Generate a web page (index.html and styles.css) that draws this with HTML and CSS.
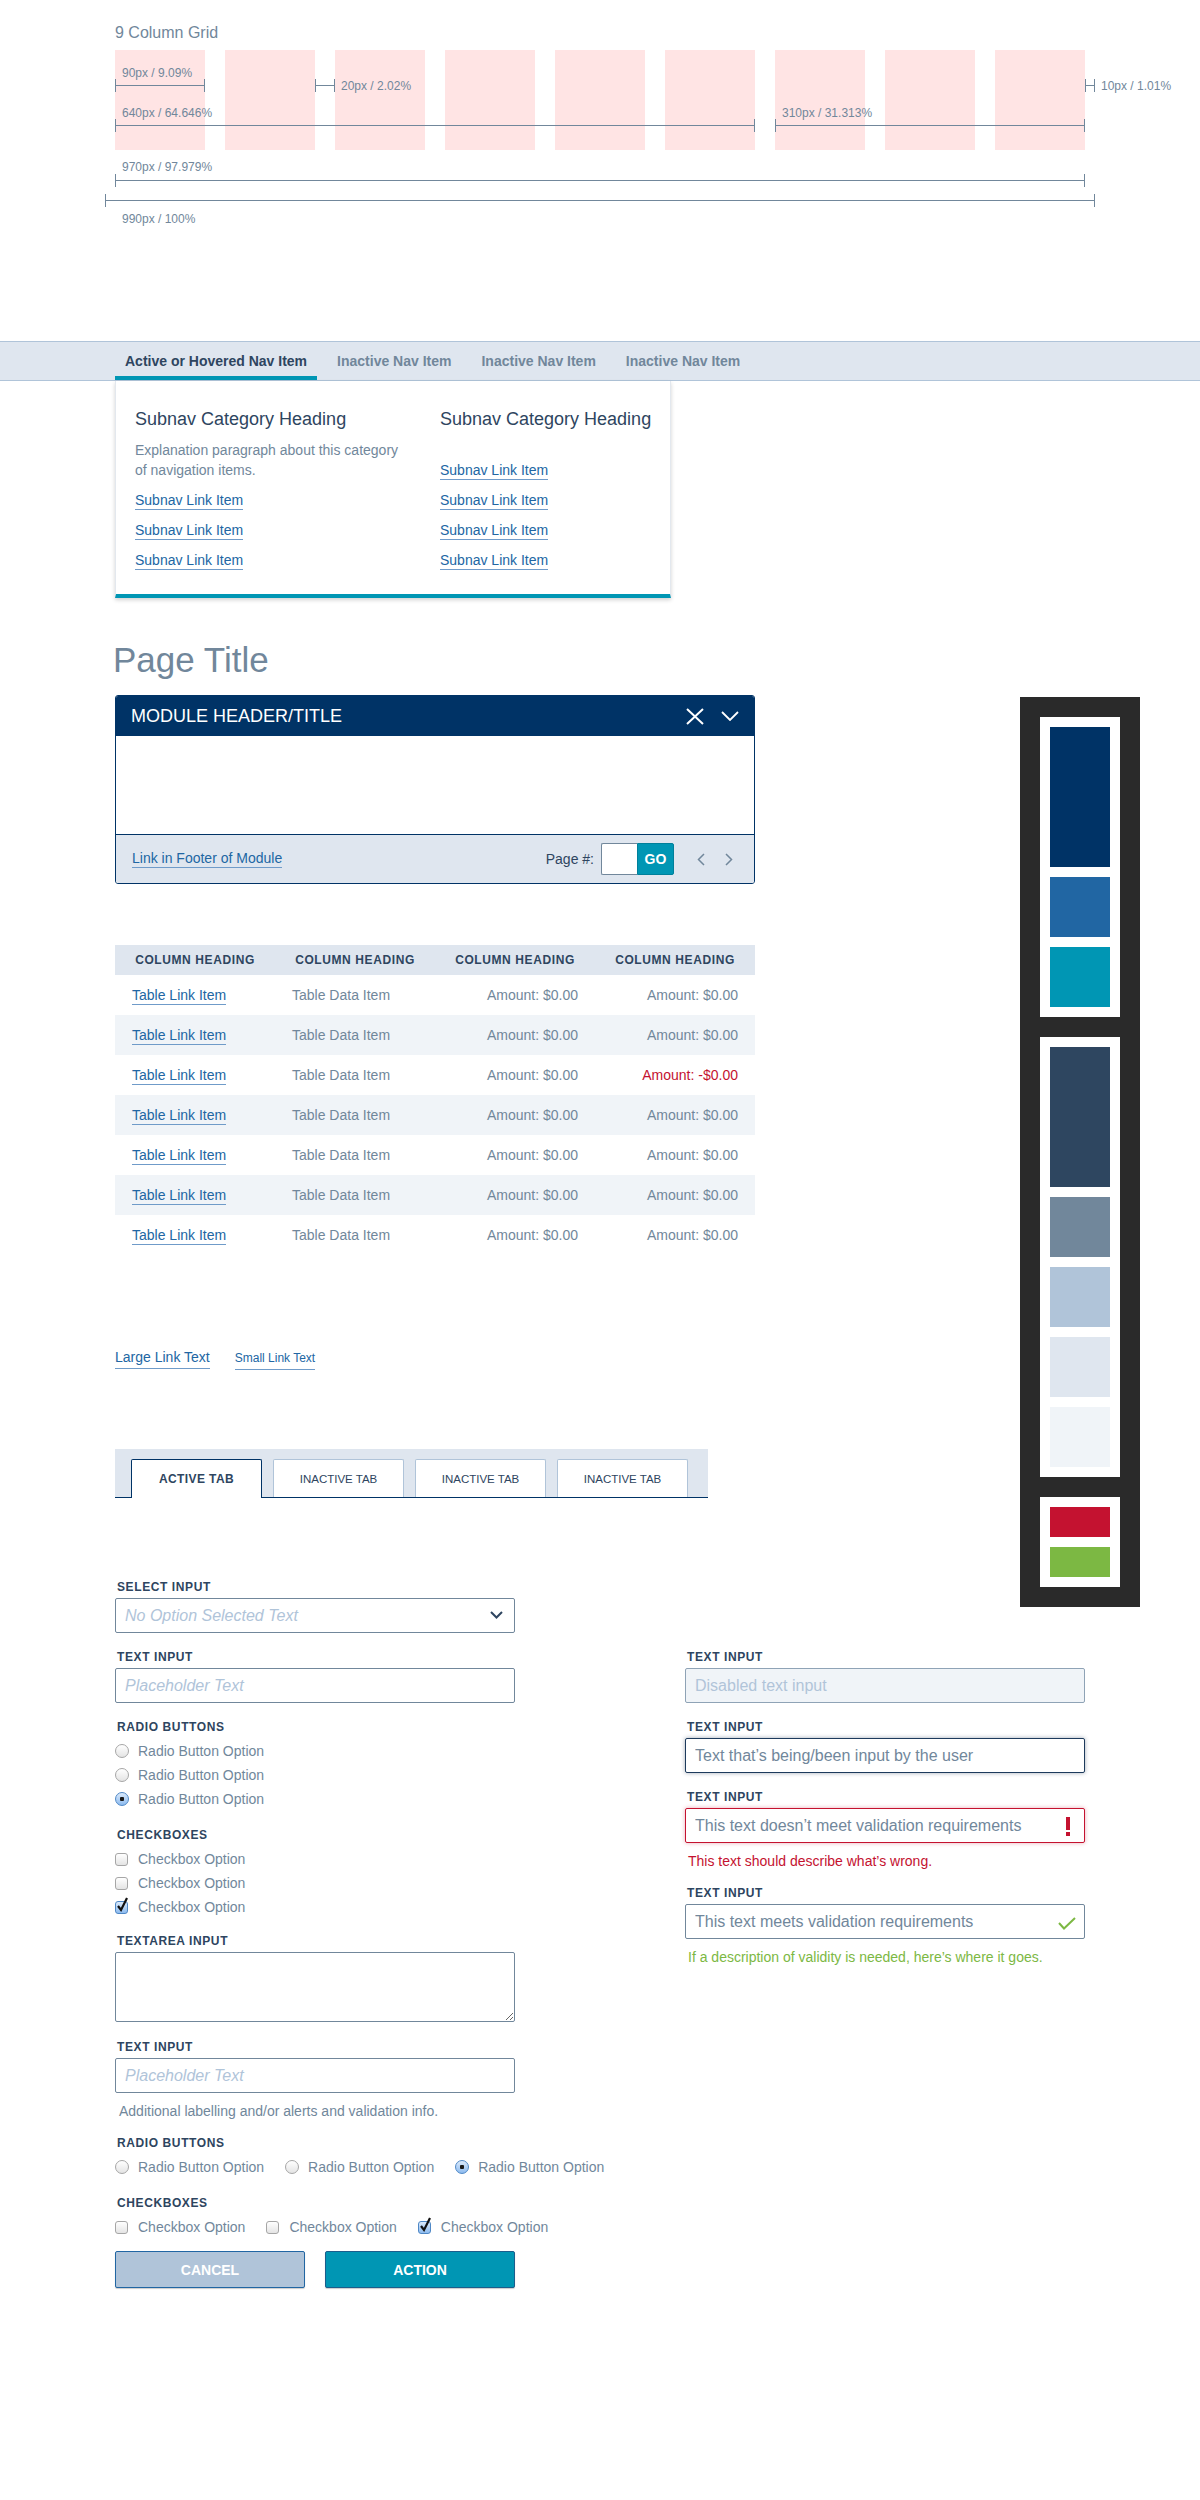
FILE: index.html
```html
<!DOCTYPE html>
<html lang="en">
<head>
    <meta charset="UTF-8" />
    <title>UI Style Guide</title>
    <link rel="stylesheet" href="styles.css">
</head>
<body>
    <!-- Grid -->
    <section class="grid-demo">
        <h2 class="grid-title">9 Column Grid</h2>
        <div class="grid-frame">
            <div class="grid-cols">
                <div class="col"></div>
                <div class="col"></div>
                <div class="col"></div>
                <div class="col"></div>
                <div class="col"></div>
                <div class="col"></div>
                <div class="col"></div>
                <div class="col"></div>
                <div class="col"></div>
                <div class="ruler on-grid m-90"><span class="ruler-label">90px / 9.09%</span></div>
                <div class="ruler on-grid m-20"><span class="ruler-label side">20px / 2.02%</span></div>
                <div class="ruler on-grid m-10"><span class="ruler-label side">10px / 1.01%</span></div>
                <div class="ruler on-grid m-640"><span class="ruler-label">640px / 64.646%</span></div>
                <div class="ruler on-grid m-310"><span class="ruler-label">310px / 31.313%</span></div>
            </div>
            <p class="ruler-caption first">970px / 97.979%</p>
            <div class="ruler inner"></div>
            <div class="ruler outer"></div>
            <p class="ruler-caption last">990px / 100%</p>
        </div>
    </section>

    <!-- Navigation -->
    <nav class="main-nav">
        <ul class="nav-list">
            <li><a class="nav-item active" href="#">Active or Hovered Nav Item</a></li>
            <li><a class="nav-item" href="#">Inactive Nav Item</a></li>
            <li><a class="nav-item" href="#">Inactive Nav Item</a></li>
            <li><a class="nav-item" href="#">Inactive Nav Item</a></li>
        </ul>
    </nav>

    <!-- Subnav dropdown -->
    <div class="subnav">
        <div class="subnav-col">
            <h3 class="subnav-heading">Subnav Category Heading</h3>
            <p class="subnav-text">Explanation paragraph about this category<br>of navigation items.</p>
            <ul class="subnav-links">
                <li><a class="link" href="#">Subnav Link Item</a></li>
                <li><a class="link" href="#">Subnav Link Item</a></li>
                <li><a class="link" href="#">Subnav Link Item</a></li>
            </ul>
        </div>
        <div class="subnav-col">
            <h3 class="subnav-heading">Subnav Category Heading</h3>
            <ul class="subnav-links no-text">
                <li><a class="link" href="#">Subnav Link Item</a></li>
                <li><a class="link" href="#">Subnav Link Item</a></li>
                <li><a class="link" href="#">Subnav Link Item</a></li>
                <li><a class="link" href="#">Subnav Link Item</a></li>
            </ul>
        </div>
    </div>

    <h1 class="page-title">Page Title</h1>

    <div class="layout">
        <div class="main-top">
            <!-- Module -->
            <div class="module">
                <div class="module-header">
                    <h2 class="module-title">MODULE HEADER/TITLE</h2>
                    <div class="module-icons">
                        <svg width="18" height="17" viewBox="0 0 18 17"><path d="M1 1 L17 16 M17 1 L1 16" stroke="#fff" stroke-width="2" fill="none"/></svg>
                        <svg width="18" height="10" viewBox="0 0 18 10"><polyline points="1,1 9,9 17,1" stroke="#fff" stroke-width="1.8" fill="none"/></svg>
                    </div>
                </div>
                <div class="module-body"></div>
                <div class="module-footer">
                    <a class="link" href="#">Link in Footer of Module</a>
                    <div class="pager">
                        <span class="pager-label">Page #:</span>
                        <div class="pager-box">
                            <input class="pager-input" type="text">
                            <button class="pager-go">GO</button>
                        </div>
                        <div class="pager-arrows">
                            <svg width="8" height="13" viewBox="0 0 8 13"><polyline points="7,1 1.5,6.5 7,12" stroke="#71879b" stroke-width="1.5" fill="none"/></svg>
                            <svg width="8" height="13" viewBox="0 0 8 13"><polyline points="1,1 6.5,6.5 1,12" stroke="#71879b" stroke-width="1.5" fill="none"/></svg>
                        </div>
                    </div>
                </div>
            </div>

            <!-- Table -->
            <table class="data-table">
                <thead>
                    <tr>
                        <th>Column Heading</th>
                        <th>Column Heading</th>
                        <th>Column Heading</th>
                        <th>Column Heading</th>
                    </tr>
                </thead>
                <tbody>
                    <tr><td><a class="link" href="#">Table Link Item</a></td><td>Table Data Item</td><td class="num">Amount: $0.00</td><td class="num">Amount: $0.00</td></tr>
                    <tr><td><a class="link" href="#">Table Link Item</a></td><td>Table Data Item</td><td class="num">Amount: $0.00</td><td class="num">Amount: $0.00</td></tr>
                    <tr><td><a class="link" href="#">Table Link Item</a></td><td>Table Data Item</td><td class="num">Amount: $0.00</td><td class="num negative">Amount: -$0.00</td></tr>
                    <tr><td><a class="link" href="#">Table Link Item</a></td><td>Table Data Item</td><td class="num">Amount: $0.00</td><td class="num">Amount: $0.00</td></tr>
                    <tr><td><a class="link" href="#">Table Link Item</a></td><td>Table Data Item</td><td class="num">Amount: $0.00</td><td class="num">Amount: $0.00</td></tr>
                    <tr><td><a class="link" href="#">Table Link Item</a></td><td>Table Data Item</td><td class="num">Amount: $0.00</td><td class="num">Amount: $0.00</td></tr>
                    <tr><td><a class="link" href="#">Table Link Item</a></td><td>Table Data Item</td><td class="num">Amount: $0.00</td><td class="num">Amount: $0.00</td></tr>
                </tbody>
            </table>

            <!-- Links -->
            <div class="link-row">
                <a class="link large" href="#">Large Link Text</a>
                <a class="link small" href="#">Small Link Text</a>
            </div>

            <!-- Tabs -->
            <ul class="tabs">
                <li class="tab active">ACTIVE TAB</li>
                <li class="tab">INACTIVE TAB</li>
                <li class="tab">INACTIVE TAB</li>
                <li class="tab">INACTIVE TAB</li>
            </ul>
        </div>

        <!-- Colour palette -->
        <div class="palette">
            <div class="swatch-group">
                <div class="swatch tall navy"></div>
                <div class="swatch blue"></div>
                <div class="swatch teal"></div>
            </div>
            <div class="swatch-group">
                <div class="swatch tall dark"></div>
                <div class="swatch slate"></div>
                <div class="swatch light"></div>
                <div class="swatch lighter"></div>
                <div class="swatch lightest"></div>
            </div>
            <div class="swatch-group">
                <div class="swatch short red"></div>
                <div class="swatch short green"></div>
            </div>
        </div>

        <!-- Forms -->
        <div class="forms">
            <div class="form-col">
                <div class="field">
                    <label class="field-label">Select Input</label>
                    <div class="input-wrap">
                        <select class="input select">
                            <option>No Option Selected Text</option>
                        </select>
                        <svg class="select-arrow" width="13" height="8" viewBox="0 0 13 8"><polyline points="1,1 6.5,6.5 12,1" stroke="#2e4560" stroke-width="2" fill="none"/></svg>
                    </div>
                </div>
                <div class="field">
                    <label class="field-label">Text Input</label>
                    <input class="input" type="text" placeholder="Placeholder Text">
                </div>
                <div class="field">
                    <label class="field-label">Radio Buttons</label>
                    <div class="options">
                        <label class="option"><span class="radio"></span>Radio Button Option</label>
                        <label class="option"><span class="radio"></span>Radio Button Option</label>
                        <label class="option"><span class="radio checked"></span>Radio Button Option</label>
                    </div>
                </div>
                <div class="field tight">
                    <label class="field-label">Checkboxes</label>
                    <div class="options">
                        <label class="option"><span class="checkbox"></span>Checkbox Option</label>
                        <label class="option"><span class="checkbox"></span>Checkbox Option</label>
                        <label class="option"><span class="checkbox checked"><svg width="13" height="16" viewBox="0 0 13 16"><polyline points="2,9 5,13 11,1" stroke="#111" stroke-width="2.2" fill="none"/></svg></span>Checkbox Option</label>
                    </div>
                </div>
                <div class="field loose">
                    <label class="field-label">Textarea Input</label>
                    <textarea class="input textarea"></textarea>
                </div>
                <div class="field has-note">
                    <label class="field-label">Text Input</label>
                    <input class="input" type="text" placeholder="Placeholder Text">
                    <p class="field-note">Additional labelling and/or alerts and validation info.</p>
                </div>
                <div class="field">
                    <label class="field-label">Radio Buttons</label>
                    <div class="options inline">
                        <label class="option"><span class="radio"></span>Radio Button Option</label>
                        <label class="option"><span class="radio"></span>Radio Button Option</label>
                        <label class="option"><span class="radio checked"></span>Radio Button Option</label>
                    </div>
                </div>
                <div class="field last">
                    <label class="field-label">Checkboxes</label>
                    <div class="options inline">
                        <label class="option"><span class="checkbox"></span>Checkbox Option</label>
                        <label class="option"><span class="checkbox"></span>Checkbox Option</label>
                        <label class="option"><span class="checkbox checked"><svg width="13" height="16" viewBox="0 0 13 16"><polyline points="2,9 5,13 11,1" stroke="#111" stroke-width="2.2" fill="none"/></svg></span>Checkbox Option</label>
                    </div>
                </div>
                <div class="button-row">
                    <button class="btn cancel">CANCEL</button>
                    <button class="btn action">ACTION</button>
                </div>
            </div>

            <div class="form-col right">
                <div class="field">
                    <label class="field-label">Text Input</label>
                    <input class="input" type="text" value="Disabled text input" disabled>
                </div>
                <div class="field">
                    <label class="field-label">Text Input</label>
                    <input class="input focused" type="text" value="Text that’s being/been input by the user">
                </div>
                <div class="field has-note">
                    <label class="field-label">Text Input</label>
                    <div class="input-wrap">
                        <input class="input invalid" type="text" value="This text doesn’t meet validation requirements">
                        <svg class="input-icon bang" width="4" height="19" viewBox="0 0 4 19"><rect x="0" y="0" width="4" height="13" fill="#c41230"/><rect x="0" y="15" width="4" height="4" fill="#c41230"/></svg>
                    </div>
                    <p class="field-note error">This text should describe what’s wrong.</p>
                </div>
                <div class="field">
                    <label class="field-label">Text Input</label>
                    <div class="input-wrap">
                        <input class="input" type="text" value="This text meets validation requirements">
                        <svg class="input-icon tick" width="18" height="13" viewBox="0 0 18 13"><polyline points="1,6 6,11.5 17,1" stroke="#7cb843" stroke-width="2" fill="none"/></svg>
                    </div>
                    <p class="field-note valid">If a description of validity is needed, here’s where it goes.</p>
                </div>
            </div>
        </div>
    </div>
</body>
</html>
```

FILE: styles.css
```css
/* Base */
body {
    margin: 0;
    font-family: "Liberation Sans", Arial, sans-serif;
    color: #2e4560;
    background-color: #ffffff;
}
h1, h2, h3, p, ul { margin: 0; padding: 0; }
ul { list-style: none; }

.link {
    color: #2166a3;
    text-decoration: none;
    border-bottom: 1px solid #6f9bc9;
    padding-bottom: 1px;
}

/* Grid demo */
.grid-demo { padding-top: 23px; }
.grid-title {
    margin: 0 0 7px 115px;
    font-size: 16px;
    line-height: 20px;
    font-weight: normal;
    color: #71879b;
}
.grid-frame {
    width: 990px;
    margin-left: 105px;
    color: #71879b;
    font-size: 12px;
}
.grid-cols {
    position: relative;
    display: grid;
    grid-template-columns: repeat(9, 90px);
    column-gap: 20px;
    height: 100px;
    padding: 0 10px;
}
.col { background-color: #ffe4e4; }

.ruler {
    position: relative;
    height: 1px;
    background-color: #71879b;
}
.ruler::before,
.ruler::after {
    content: "";
    position: absolute;
    top: -6px;
    width: 1px;
    height: 13px;
    background-color: #71879b;
}
.ruler::before { left: 0; }
.ruler::after { right: 0; }
.ruler.on-grid { position: absolute; }
.m-90 { left: 10px; top: 35px; width: 90px; }
.m-20 { left: 210px; top: 35px; width: 20px; }
.m-10 { left: 980px; top: 35px; width: 10px; }
.m-640 { left: 10px; top: 75px; width: 640px; }
.m-310 { left: 670px; top: 75px; width: 310px; }

.ruler-label {
    position: absolute;
    left: 7px;
    bottom: 6px;
    line-height: 14px;
    white-space: nowrap;
}
.ruler-label.side { left: calc(100% + 6px); bottom: auto; top: -6px; }

.ruler-caption { padding-left: 17px; line-height: 14px; }
.ruler-caption.first { margin-top: 10px; }
.ruler-caption.last { margin-top: 11px; }
.ruler.inner { margin: 6px 10px 0; }
.ruler.outer { margin-top: 19px; }

/* Navigation */
.main-nav {
    margin-top: 115px;
    background-color: #dfe6ef;
    border-top: 1px solid #b0c4d9;
    border-bottom: 1px solid #b0c4d9;
}
.nav-list {
    display: flex;
    gap: 10px;
    height: 38px;
    padding-left: 115px;
}
.nav-item {
    display: block;
    padding: 0 10px;
    line-height: 38px;
    font-size: 14px;
    font-weight: bold;
    color: #71879b;
    text-decoration: none;
}
.nav-item.active {
    color: #2e4560;
    box-shadow: inset 0 -4px 0 #0096b4;
}

/* Subnav dropdown */
.subnav {
    display: grid;
    grid-template-columns: 285px 1fr;
    column-gap: 20px;
    width: 556px;
    box-sizing: border-box;
    margin-left: 115px;
    padding: 26px 8px 24px 19px;
    border: 1px solid #e3e8ee;
    border-top: none;
    border-bottom: 4px solid #0096b4;
    box-shadow: 0 2px 4px rgba(0, 0, 0, 0.18);
}
.subnav-heading {
    margin-bottom: 9px;
    font-size: 18px;
    line-height: 24px;
    font-weight: normal;
    white-space: nowrap;
    color: #2e4560;
}
.subnav-text {
    font-size: 14px;
    line-height: 20px;
    color: #71879b;
}
.subnav-links li {
    margin-top: 10px;
    font-size: 14px;
    line-height: 20px;
}
.subnav-links.no-text { padding-top: 10px; }

.page-title {
    margin: 42px 0 15px 113px;
    font-size: 35px;
    line-height: 40px;
    font-weight: normal;
    color: #71879b;
}

/* Main layout */
.layout {
    display: grid;
    grid-template-columns: 640px 265px 120px;
    width: 1025px;
    margin-left: 115px;
    padding-bottom: 200px;
}
.main-top { grid-column: 1; grid-row: 1; }

/* Module */
.module {
    border: 1px solid #003366;
    border-radius: 3px;
    overflow: hidden;
}
.module-header {
    display: flex;
    align-items: center;
    justify-content: space-between;
    height: 40px;
    padding: 0 15px;
    background-color: #003366;
}
.module-title {
    font-size: 18px;
    font-weight: normal;
    color: #ffffff;
}
.module-icons {
    display: flex;
    align-items: center;
    gap: 17px;
}
.module-icons svg { display: block; }
.module-body { height: 98px; }
.module-footer {
    display: flex;
    align-items: center;
    justify-content: space-between;
    height: 48px;
    padding: 0 21px 0 16px;
    border-top: 1px solid #003366;
    background-color: #dfe6ef;
    font-size: 14px;
}
.pager { display: flex; align-items: center; }
.pager-label { color: #2e4560; }
.pager-box { display: flex; margin-left: 7px; }
.pager-input {
    width: 36px;
    height: 32px;
    box-sizing: border-box;
    border: 1px solid #71879b;
    border-right: none;
    border-radius: 2px 0 0 2px;
    background-color: #ffffff;
}
.pager-go {
    width: 37px;
    height: 32px;
    border: 1px solid #00809b;
    border-radius: 0 2px 2px 0;
    background-color: #0096b4;
    color: #ffffff;
    font-family: inherit;
    font-size: 14px;
    font-weight: bold;
}
.pager-arrows {
    display: flex;
    gap: 20px;
    margin-left: 23px;
}
.pager-arrows svg { display: block; }

/* Table */
.data-table {
    width: 640px;
    margin-top: 61px;
    border-collapse: collapse;
    table-layout: fixed;
}
.data-table th {
    height: 30px;
    padding: 0 17px;
    background-color: #dfe6ef;
    color: #2e4560;
    font-size: 12px;
    font-weight: bold;
    letter-spacing: 0.6px;
    text-transform: uppercase;
    text-align: center;
}
.data-table td {
    height: 40px;
    padding: 0 17px;
    font-size: 14px;
    color: #71879b;
}
.data-table tbody tr:nth-child(even) { background-color: #f0f4f8; }
.data-table .num { text-align: right; }
.data-table .negative { color: #c41230; }

/* Links */
.link-row {
    display: flex;
    align-items: baseline;
    gap: 25px;
    margin-top: 92px;
    line-height: 20px;
}
.link.large { font-size: 14px; }
.link.small { font-size: 12px; }

/* Tabs */
.tabs {
    display: flex;
    gap: 11px;
    width: 593px;
    box-sizing: border-box;
    margin-top: 79px;
    padding: 10px 16px 0;
    background-color: #dfe6ef;
    border-bottom: 1px solid #003366;
}
.tab {
    display: flex;
    align-items: center;
    justify-content: center;
    width: 131px;
    height: 38px;
    box-sizing: border-box;
    border: 1px solid #b0c4d9;
    border-bottom: none;
    border-radius: 2px 2px 0 0;
    background-color: #ffffff;
    font-size: 11.5px;
    color: #2e4560;
}
.tab.active {
    height: 39px;
    margin-bottom: -1px;
    border-color: #003366;
    font-size: 12px;
    font-weight: bold;
    letter-spacing: 0.4px;
}

/* Palette */
.palette {
    grid-column: 3;
    grid-row: 1 / 3;
    align-self: start;
    display: flex;
    flex-direction: column;
    gap: 20px;
    margin-top: 2px;
    padding: 20px;
    background-color: #2a2a2a;
}
.swatch-group {
    display: flex;
    flex-direction: column;
    gap: 10px;
    padding: 10px;
    background-color: #ffffff;
}
.swatch { height: 60px; }
.swatch.tall { height: 140px; }
.swatch.short { height: 30px; }
.navy { background-color: #003366; }
.blue { background-color: #2166a3; }
.teal { background-color: #0096b4; }
.dark { background-color: #2e4660; }
.slate { background-color: #71879b; }
.light { background-color: #b0c4d9; }
.lighter { background-color: #dfe6ef; }
.lightest { background-color: #f0f4f8; }
.red { background-color: #c41230; }
.green { background-color: #7cb843; }

/* Forms */
.forms {
    grid-column: 1 / 3;
    grid-row: 2;
    width: 970px;
    margin-top: 81px;
    display: grid;
    grid-template-columns: 400px 400px;
    column-gap: 170px;
    align-items: start;
}
.form-col.right { padding-top: 70px; }

.field { margin-bottom: 16px; }
.field.tight { margin-bottom: 14px; }
.field.loose { margin-bottom: 17px; }
.field.has-note { margin-bottom: 14px; }
.field.last { margin-bottom: 12px; }

.field-label {
    display: block;
    margin-bottom: 3px;
    padding-left: 2px;
    font-size: 12px;
    line-height: 16px;
    font-weight: bold;
    letter-spacing: 0.6px;
    text-transform: uppercase;
    color: #2e4560;
}
.input-wrap { position: relative; }
.input {
    display: block;
    width: 100%;
    height: 35px;
    box-sizing: border-box;
    padding: 0 9px;
    border: 1px solid #71879b;
    border-radius: 2px;
    background-color: #ffffff;
    font-family: "Liberation Sans", Arial, sans-serif;
    font-size: 16px;
    color: #71879b;
    outline: none;
}
.input::placeholder { color: #b0c4d9; font-style: italic; }
.select {
    appearance: none;
    color: #b0c4d9;
    font-style: italic;
}
.select-arrow {
    position: absolute;
    right: 12px;
    top: 13px;
}
.textarea { height: 70px; padding: 8px 9px; }
.input:disabled {
    background-color: #f0f4f8;
    border-color: #8fa3b6;
    color: #b0c4d9;
    -webkit-text-fill-color: #b0c4d9;
    opacity: 1;
}
.input.focused {
    border-color: #1d3a5c;
    box-shadow: 0 0 4px rgba(46, 69, 96, 0.45);
}
.input.invalid {
    border-color: #c41230;
    box-shadow: 0 0 4px rgba(196, 18, 48, 0.35);
}
.input-icon { position: absolute; }
.input-icon.bang { right: 15px; top: 9px; }
.input-icon.tick { right: 9px; top: 13px; }

.field-note {
    margin-top: 8px;
    padding-left: 4px;
    font-size: 14px;
    line-height: 20px;
    color: #71879b;
}
.field-note.error { color: #c41230; padding-left: 3px; }
.field-note.valid { color: #7cb843; padding-left: 3px; }

.options { padding-top: 1px; }
.options.inline { display: flex; gap: 21px; }
.option {
    display: flex;
    align-items: center;
    flex-shrink: 0;
    gap: 9px;
    line-height: 24px;
    font-size: 14px;
    white-space: nowrap;
    color: #71879b;
}
.radio {
    width: 14px;
    height: 14px;
    box-sizing: border-box;
    border: 1px solid #a6a6a6;
    border-radius: 50%;
    background: linear-gradient(#ffffff, #e4e4e4);
}
.radio.checked {
    border-color: #4f88c6;
    background: radial-gradient(circle, #1a1a1a 0 2px, transparent 2.5px), linear-gradient(#dbeafb, #8dbbef);
}
.checkbox {
    position: relative;
    width: 13px;
    height: 13px;
    margin-right: 1px;
    box-sizing: border-box;
    border: 1px solid #a6a6a6;
    border-radius: 3px;
    background: linear-gradient(#ffffff, #e4e4e4);
}
.checkbox.checked {
    border-color: #4f88c6;
    background: linear-gradient(#dbeafb, #8dbbef);
}
.checkbox svg {
    position: absolute;
    left: 0;
    top: -5px;
}

.button-row { display: flex; gap: 20px; }
.btn {
    width: 190px;
    height: 37px;
    border-radius: 2px;
    font-family: inherit;
    font-size: 14px;
    font-weight: bold;
    color: #ffffff;
    box-shadow: 0 1px 1px rgba(0, 0, 0, 0.2);
}
.btn.cancel {
    background-color: #b0c4d9;
    border: 1px solid #2166a3;
}
.btn.action {
    background-color: #0096b4;
    border: 1px solid #1b5e8c;
}
```
